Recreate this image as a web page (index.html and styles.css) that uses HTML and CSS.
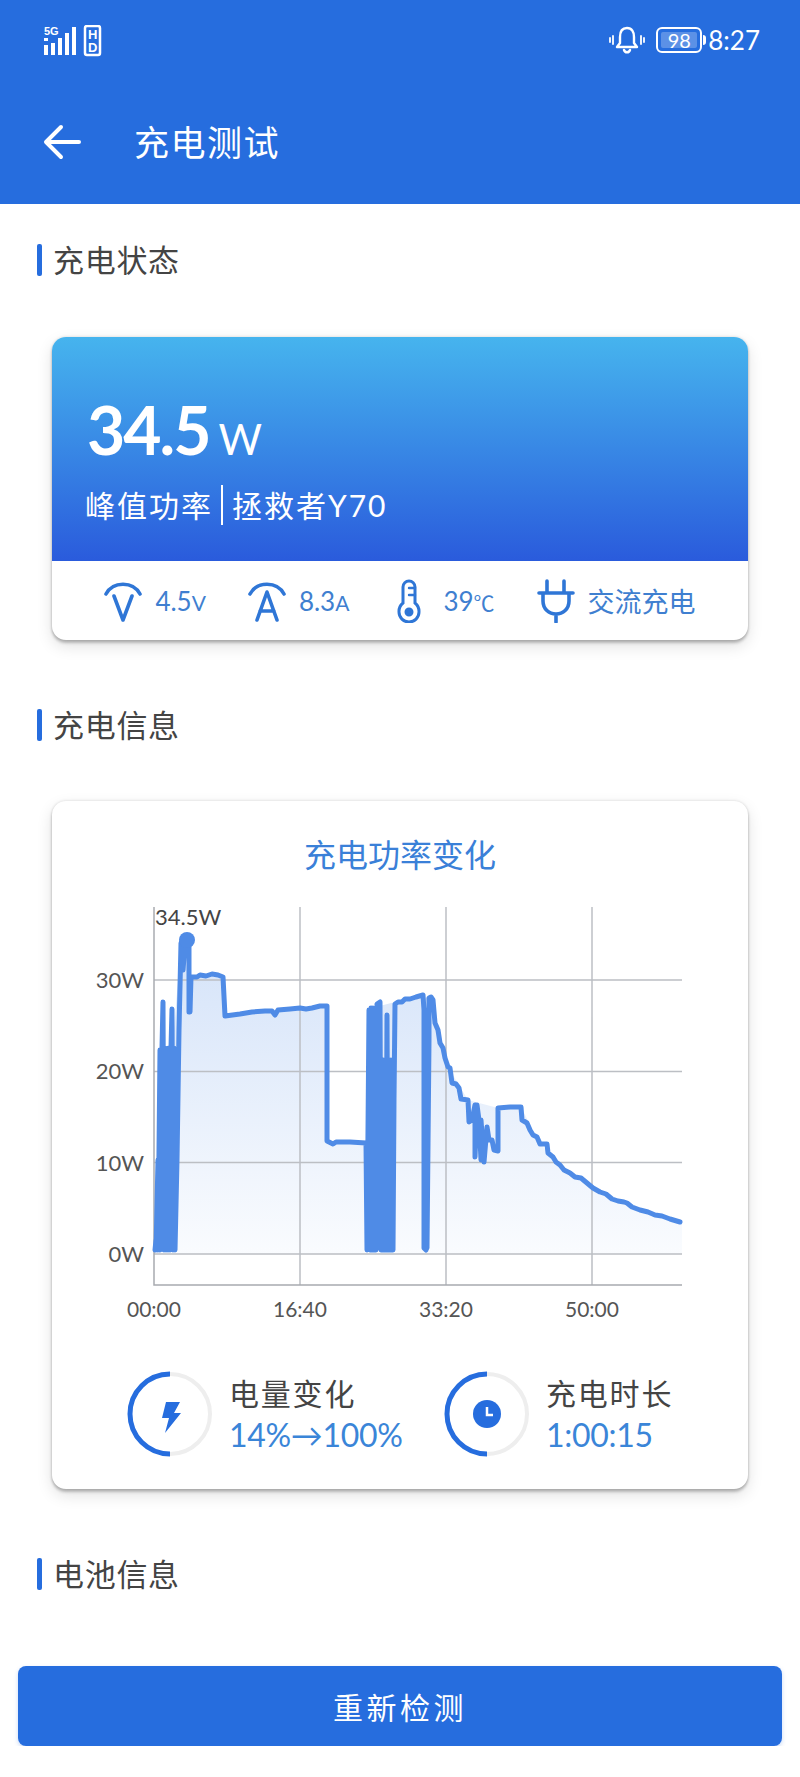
FILE: index.html
```html
<!DOCTYPE html>
<html lang="zh-CN">
<head>
  <meta charset="UTF-8">
  <title>充电测试</title>
  <link rel="stylesheet" href="styles.css">
</head>
<body>
  <header class="top">
    <div class="status-bar">
      <svg class="status-left" width="60" height="32" viewBox="0 0 60 32">
        <text class="tiny" x="0" y="10">5G</text>
        <g fill="#fff">
          <rect x="0" y="13" width="4" height="3"/><rect x="0" y="20" width="4" height="10"/>
          <rect x="7" y="18" width="4" height="12"/><rect x="14" y="13" width="4" height="17"/>
          <rect x="21" y="8" width="4" height="22"/><rect x="28" y="2" width="4" height="28"/>
        </g>
        <rect x="41" y="1" width="15" height="29" rx="2" fill="none" stroke="#fff" stroke-width="2.500"/>
        <text class="tiny-hd" x="44" y="14">H</text>
        <text class="tiny-hd" x="44" y="27">D</text>
      </svg>
      <div class="status-right">
        <svg width="36" height="30" viewBox="0 0 36 30" fill="none" stroke="#fff" stroke-width="2.400" stroke-linecap="round" stroke-linejoin="round">
          <path d="M18 3c-5 0-7 4-7 9v6l-3 4h20l-3-4v-6c0-5-2-9-7-9z"/>
          <path d="M15 25c1 3 5 3 6 0"/>
          <path d="M4 11v8M1 13v4M32 11v8M35 13v4" stroke-width="1.800"/>
        </svg>
        <div class="battery"><span class="battery-fill">98</span></div>
        <span class="clock">8:27</span>
      </div>
    </div>
    <div class="app-bar">
      <svg width="40" height="36" viewBox="0 0 40 36" fill="none" stroke="#fff" stroke-width="4" stroke-linecap="round" stroke-linejoin="round">
        <path d="M36 18H4M18 3L3 18l15 15"/>
      </svg>
      <h1>充电测试</h1>
    </div>
  </header>

  <h2 class="section-title first">充电状态</h2>
  <section class="card status-card">
    <div class="power">
      <div class="power-value"><b>34.5</b><span>W</span></div>
      <div class="power-info"><span>峰值功率</span><i></i><span>拯救者Y70</span></div>
    </div>
    <div class="stats">
      <div class="stat">
        <svg width="38" height="42" viewBox="0 0 38 42" fill="none" stroke="#2f76d6" stroke-width="3.600" stroke-linecap="round" stroke-linejoin="round">
          <path d="M2 14C9 1 29 1 36 14"/><path d="M10 16l9 24 9-24"/>
        </svg>
        <span>4.5<small>V</small></span>
      </div>
      <div class="stat">
        <svg width="38" height="42" viewBox="0 0 38 42" fill="none" stroke="#2f76d6" stroke-width="3.600" stroke-linecap="round" stroke-linejoin="round">
          <path d="M2 14C9 1 29 1 36 14"/><path d="M9 40l10-28 10 28M12 31h14"/>
        </svg>
        <span>8.3<small>A</small></span>
      </div>
      <div class="stat stat-temp">
        <svg width="28" height="44" viewBox="0 0 28 44" fill="none" stroke="#2f76d6" stroke-width="3" stroke-linecap="round">
          <path d="M8 24V8a6 6 0 0 1 12 0v16a11 11 0 0 1 4 9 10 10 0 0 1-20 0 11 11 0 0 1 4-9z"/>
          <path d="M14 9h6M14 16h6" stroke-width="2.400"/>
          <circle cx="14" cy="33" r="3" fill="#2f76d6"/>
        </svg>
        <span>39<small>℃</small></span>
      </div>
      <div class="stat">
        <svg width="38" height="44" viewBox="0 0 38 44" fill="none" stroke="#2f76d6" stroke-width="3.600" stroke-linecap="round" stroke-linejoin="round">
          <path d="M10 2v12M27 2v12M2 14h34M6 14v8c0 8 6 13 13 13s13-5 13-13v-8M19 35v8"/>
        </svg>
        <span class="cn">交流充电</span>
      </div>
    </div>
  </section>

  <h2 class="section-title">充电信息</h2>
  <section class="card info-card">
    <h3>充电功率变化</h3>
    <svg class="chart" width="696" height="450" viewBox="52 890 696 450">
      <defs>
        <linearGradient id="areaFill" x1="0" y1="0" x2="0" y2="1">
          <stop offset="0" stop-color="#4f8be6" stop-opacity="0.24"/>
          <stop offset="1" stop-color="#4f8be6" stop-opacity="0.03"/>
        </linearGradient>
      </defs>
      <path fill="url(#areaFill)" d="M156 1254L181 943L189 945L191 977L223 977L225 1016L327 1006L327 1142L366 1143L372 1008L395 1002L430 997L448 1067L468 1100L498 1108L521 1107L540 1144L570 1173L600 1192L643 1211L682 1222V1254Z"/>
      <g class="grid">
        <path d="M154 980H682M154 1071.500H682M154 1162.500H682M154 1254H682M300 907V1285M446 907V1285M592 907V1285"/>
        <path class="axis" d="M154 907V1285H682"/>
      </g>
      <path class="line" d="M155 1250L156 1240L156 1250L158 1160L158 1250L160 1050L160 1250L162 1048L163 1002L164 1250L165 1048L166 1250L167 1050L168 1250L169 1048L170 1250L171 1048L172 1009L173 1250L174 1048L175 1250L177 1160L179 1030L181 943L183 970L185 945L189 945L189 1012L190 1012L191 977L197 977L200 975L206 976L212 974L218 975L223 977L225 1016L240 1014L252 1012L265 1011L272 1011L275 1015L278 1010L290 1009L300 1008L306 1009L312 1008L320 1006L327 1006L327 1141L333 1144L336 1142L350 1142L366 1143L367 1250L369 1010L370 1250L371 1008L372 1250L373 1008L374 1250L375 1250L376 1250L377 1004L380 1002L381 1250L382 1250L383 1060L384 1250L385 1060L386 1250L387 1015L388 1250L389 1060L390 1250L391 1060L392 1250L393 1250L394 1100L395 1004L398 1002L402 1002L405 999L410 999L416 997L423 995L424 1010L424 1248L426 1250L426 1010L427 1248L429 1040L429 998L431 997L433 1000L435 1023L438 1030L440 1043L443 1048L445 1058L448 1067L450 1068L452 1083L456 1084L459 1088L461 1099L468 1100L469 1122L472 1120L475 1105L475 1157L477 1105L479 1120L481 1160L481 1120L484 1162L487 1127L489 1140L492 1140L494 1150L498 1151L498 1108L510 1107L521 1107L522 1120L527 1123L530 1130L533 1135L537 1137L540 1144L547 1144L548 1153L553 1157L556 1162L560 1165L564 1170L570 1173L575 1177L581 1178L587 1183L593 1188L600 1192L606 1194L612 1199L618 1201L624 1202L627 1203L632 1207L640 1210L648 1212L655 1215L662 1216L670 1219L680 1222"/>
      <circle cx="187" cy="940" r="8" fill="#4f8be6"/>
      <text class="peak" x="155" y="925">34.5W</text>
      <g class="y-label">
        <text x="144" y="988">30W</text>
        <text x="144" y="1079">20W</text>
        <text x="144" y="1171">10W</text>
        <text x="144" y="1262">0W</text>
      </g>
      <g class="x-label">
        <text x="154" y="1317">00:00</text>
        <text x="300" y="1317">16:40</text>
        <text x="446" y="1317">33:20</text>
        <text x="592" y="1317">50:00</text>
      </g>
    </svg>
    <div class="summary">
      <div class="summary-item">
        <svg width="86" height="86" viewBox="0 0 86 86" fill="none">
          <path d="M43 3a40 40 0 0 1 0 80" stroke="#eeeeee" stroke-width="4"/>
          <path d="M43 3a40 40 0 0 0 0 80" stroke="#266dde" stroke-width="5"/>
          <path d="M39 31h14l-6 11h7L38 62l4-15h-7z" fill="#266dde"/>
        </svg>
        <div>
          <div class="summary-label">电量变化</div>
          <div class="summary-value">14%→100%</div>
        </div>
      </div>
      <div class="summary-item">
        <svg width="86" height="86" viewBox="0 0 86 86" fill="none">
          <path d="M43 3a40 40 0 0 1 0 80" stroke="#eeeeee" stroke-width="4"/>
          <path d="M43 3a40 40 0 0 0 0 80" stroke="#266dde" stroke-width="5"/>
          <circle cx="43" cy="43" r="14" fill="#266dde"/>
          <path d="M43 36v8h6" stroke="#fff" stroke-width="2.500"/>
        </svg>
        <div>
          <div class="summary-label">充电时长</div>
          <div class="summary-value">1:00:15</div>
        </div>
      </div>
    </div>
  </section>

  <h2 class="section-title">电池信息</h2>
  <button class="retest">重新检测</button>
</body>
</html>
```

FILE: styles.css
```css
* { box-sizing: border-box; }
body { margin: 0; background: #fff; color: #444; font-family: "Lato", "Noto Sans CJK SC", sans-serif; }

.top { height: 204px; background: #266dde; color: #fff; }
.status-bar { height: 84px; padding: 25px 40px 0 44px; display: flex; justify-content: space-between; align-items: flex-start; }
.status-left { display: block; }
.tiny { font: bold 11px "Liberation Sans", sans-serif; fill: #fff; }
.tiny-hd { font: bold 13px "Liberation Sans", sans-serif; fill: #fff; }
.status-right { display: flex; align-items: center; gap: 11px; height: 30px; }
.battery { position: relative; width: 46px; height: 26px; padding: 3px; border: 2px solid #fff; border-radius: 6px; }
.battery::after { content: ""; position: absolute; right: -6px; top: 6px; width: 3px; height: 10px; background: #fff; border-radius: 0 3px 3px 0; }
.battery-fill { display: block; height: 16px; background: rgba(255, 255, 255, .25); border-radius: 2px; font-size: 20px; line-height: 16px; text-align: center; }
.clock { margin-left: -5px; font-size: 26px; font-weight: 400; }
.app-bar { height: 120px; padding-left: 43px; display: flex; align-items: center; padding-bottom: 4px; }
.app-bar h1 { margin: 0 0 0 51px; font-size: 35px; font-weight: 400; line-height: 48px; letter-spacing: 1.500px; }

.section-title { position: relative; margin: 69px 0 0 37px; padding-left: 16px; height: 34px; font-size: 31px; font-weight: 400; line-height: 32px; letter-spacing: .7px; }
.section-title.first { margin-top: 40px; }
.section-title::before { content: ""; position: absolute; left: 0; top: 0; width: 5px; height: 32px; background: #266dde; border-radius: 2px; }

.card { margin: 59px 52px 0; background: #fff; border-radius: 14px; overflow: hidden; box-shadow: 0 3px 3px rgba(0, 0, 0, .22), 0 6px 16px rgba(0, 0, 0, .12), 0 0 3px rgba(0, 0, 0, .15); }
.status-card { height: 303px; }
.info-card { height: 688px; margin-top: 58px; padding-top: 35px; }
.power { height: 224px; padding: 58px 0 0 35px; color: #fff; background: linear-gradient(#46b4ee, #2a5bdc); }
.power-value { display: flex; align-items: baseline; height: 70px; line-height: 70px; }
.power-value b { font-size: 66px; font-weight: 700; letter-spacing: -2px; }
.power-value span { margin-left: 9px; font-size: 42px; font-weight: 400; }
.power-info { display: flex; align-items: center; margin: 19px 0 0 -2px; font-size: 30px; line-height: 42px; letter-spacing: 2px; }
.power-info i { width: 2px; height: 40px; margin: 0 9px 0 8px; background: #fff; }

.stats { height: 79px; display: flex; justify-content: center; align-items: center; gap: 42px; color: #3f7fd0; }
.stat { display: flex; align-items: center; gap: 13px; font-size: 26px; }
.stat small { font-size: 21px; }
.stat .cn { font-size: 27px; letter-spacing: 0; }
.stat-temp { gap: 20px; margin-left: 4px; }

.info-card h3 { margin: 0; height: 54px; text-align: center; font-size: 32px; font-weight: 400; line-height: 38px; color: #3a80d8; letter-spacing: 0; }
.chart { display: block; }
.grid path { fill: none; stroke: #bcbfc4; stroke-width: 1.500; }
.grid .axis { stroke: #a8abb0; }
.line { fill: none; stroke: #4f8be6; stroke-width: 5; stroke-linejoin: round; stroke-linecap: round; }
.peak { font-size: 22px; fill: #444; }
.y-label text { font-size: 22px; fill: #555; text-anchor: end; }
.x-label text { font-size: 21px; fill: #555; text-anchor: middle; }

.summary { display: grid; grid-template-columns: 317px 1fr; margin: 31px 0 0 75px; }
.summary-item { display: flex; align-items: center; gap: 16px; }
.summary-label { font-size: 30px; line-height: 41px; letter-spacing: 1.800px; }
.summary-value { font-size: 32px; line-height: 41px; color: #3a85d8; font-weight: 400; letter-spacing: -.3px; }

.retest { display: block; width: 764px; height: 80px; margin: 74px 18px 0; border: none; border-radius: 8px; background: #266dde; color: #fff; font-family: inherit; font-size: 30px; letter-spacing: 3.500px; box-shadow: 0 2px 4px rgba(38, 109, 222, .25); }
```
